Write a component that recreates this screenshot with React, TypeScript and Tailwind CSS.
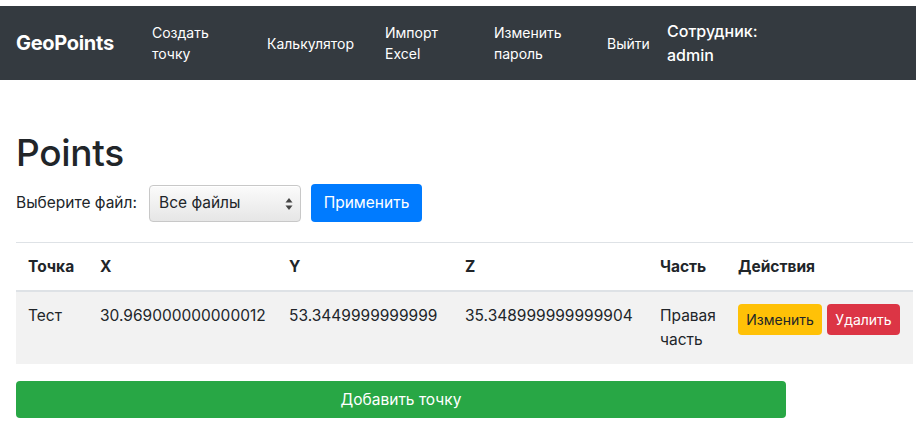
type Point = {
  name: string;
  x: string;
  y: string;
  z: string;
  part: string;
};

const points: Point[] = [
  { name: "Тест", x: "30.969000000000012", y: "53.3449999999999", z: "35.348999999999904", part: "Правая часть" },
];

const navItems = [
  { label: "Создать точку", w: "w-[115px]" },
  { label: "Калькулятор", w: "w-[118px]" },
  { label: "Импорт Excel", w: "w-[109px]" },
  { label: "Изменить пароль", w: "w-[113px]" },
  { label: "Выйти", w: "w-[60px]" },
];

export default function App() {
  return (
    <div className="min-h-[442px] bg-white pt-[6px] font-['Inter',sans-serif] text-[#212529]">
      <nav className="flex h-[74px] items-center bg-[#343a40] px-4 text-white">
        <span className="w-[136px] text-[20px] font-bold tracking-[-0.3px]">GeoPoints</span>
        {navItems.map((item) => (
          <a key={item.label} className={`${item.w} text-[14px] leading-[21px] text-white`}>
            <span className="block w-min">{item.label}</span>
          </a>
        ))}
        <span className="block w-min text-[16px] font-medium leading-[24px]">Сотрудник: admin</span>
      </nav>

      <div className="px-4">
        <h1 className="mt-[49px] text-[37px] font-medium leading-[48px] tracking-[-0.3px]">Points</h1>

        <div className="mt-[7px] flex items-center text-[15.5px]">
          <label className="w-[133px]">Выберите файл:</label>
          <div className="relative flex h-[37px] w-[152px] items-center rounded-[4px] border border-[#c8c8c8] bg-gradient-to-b from-[#fbfbfb] to-[#e6e6e6] pl-[9px] shadow-[inset_0_1px_0_#fff]">
            Все файлы
            <svg className="absolute right-[7px] top-[12px]" width="8" height="12" viewBox="0 0 8 12">
              <path d="M4 0 L7.5 4.5 H0.5 Z" fill="#444" />
              <path d="M4 12 L7.5 7.5 H0.5 Z" fill="#444" />
            </svg>
          </div>
          <button className="ml-[10px] h-[38px] w-[111px] rounded-[4px] bg-[#007bff] text-white">
            Применить
          </button>
        </div>

        <table className="mt-[20px] w-[897px] table-fixed border-collapse text-[15.5px]">
          <thead>
            <tr className="border-t border-[#dee2e6]">
              <th className="w-[72px] border-b-2 border-[#dee2e6] px-3 py-3 text-left font-bold">Точка</th>
              <th className="w-[189px] border-b-2 border-[#dee2e6] px-3 py-3 text-left font-bold">X</th>
              <th className="w-[176px] border-b-2 border-[#dee2e6] px-3 py-3 text-left font-bold">Y</th>
              <th className="w-[195px] border-b-2 border-[#dee2e6] px-3 py-3 text-left font-bold">Z</th>
              <th className="w-[78px] border-b-2 border-[#dee2e6] px-3 py-3 text-left font-bold">Часть</th>
              <th className="border-b-2 border-[#dee2e6] px-3 py-3 text-left font-bold">Действия</th>
            </tr>
          </thead>
          <tbody>
            {points.map((p) => (
              <tr key={p.name} className="bg-[#f2f2f2] align-top leading-[24px]">
                <td className="px-3 py-3">{p.name}</td>
                <td className="px-3 py-3">{p.x}</td>
                <td className="px-3 py-3">{p.y}</td>
                <td className="px-3 py-3">{p.z}</td>
                <td className="px-3 py-3">{p.part}</td>
                <td className="px-3 py-3">
                  <div className="flex gap-[5px]">
                    <button className="h-[31px] w-[84px] rounded-[4px] bg-[#ffc107] text-[14px] text-[#212529]">
                      Изменить
                    </button>
                    <button className="h-[31px] w-[73px] rounded-[4px] bg-[#dc3545] text-[14px] text-white">
                      Удалить
                    </button>
                  </div>
                </td>
              </tr>
            ))}
          </tbody>
        </table>

        <button className="mt-[17px] h-[37px] w-[770px] rounded-[4px] bg-[#28a745] text-[15.5px] text-white">
          Добавить точку
        </button>
      </div>
    </div>
  );
}
